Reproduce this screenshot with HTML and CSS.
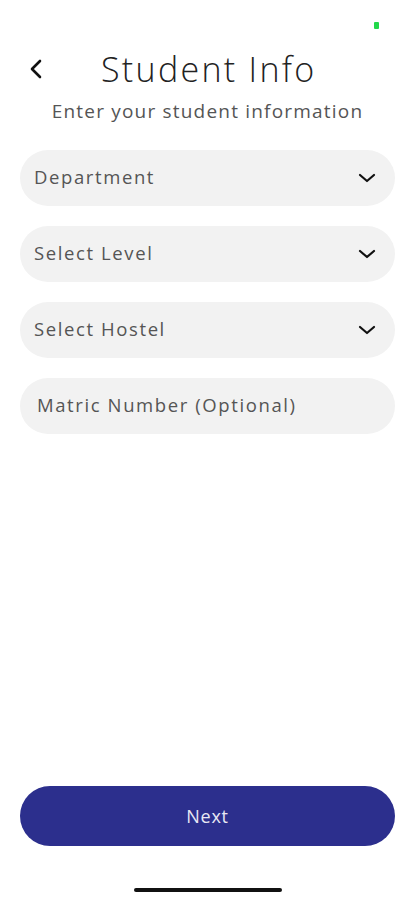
FILE: index.html
```html
<!DOCTYPE html>
<html lang="en">
<head>
    <meta charset="UTF-8">
    <title>Student Info</title>
    <link rel="stylesheet" href="styles.css">
</head>

<body>
    <div class="screen">
        <div class="status-bar">
            <span class="status-dot"></span>
        </div>

        <div class="header">
            <a class="back" href="#">
                <svg width="14" height="20" viewBox="0 0 14 20">
                    <path d="M11 2 L3 10 L11 18" fill="none" stroke="#111" stroke-width="2.6" stroke-linecap="round" stroke-linejoin="round"/>
                </svg>
            </a>
            <h1 class="title">Student Info</h1>
        </div>
        <p class="subtitle">Enter your student information</p>

        <form class="form">
            <div class="field select">
                <span class="label">Department</span>
                <svg class="chevron" width="18" height="10" viewBox="0 0 18 10">
                    <path d="M2 2 L9 8 L16 2" fill="none" stroke="#111" stroke-width="2.2" stroke-linecap="round" stroke-linejoin="round"/>
                </svg>
            </div>
            <div class="field select">
                <span class="label">Select Level</span>
                <svg class="chevron" width="18" height="10" viewBox="0 0 18 10">
                    <path d="M2 2 L9 8 L16 2" fill="none" stroke="#111" stroke-width="2.2" stroke-linecap="round" stroke-linejoin="round"/>
                </svg>
            </div>
            <div class="field select">
                <span class="label">Select Hostel</span>
                <svg class="chevron" width="18" height="10" viewBox="0 0 18 10">
                    <path d="M2 2 L9 8 L16 2" fill="none" stroke="#111" stroke-width="2.2" stroke-linecap="round" stroke-linejoin="round"/>
                </svg>
            </div>
            <div class="field input">
                <span class="label">Matric Number (Optional)</span>
            </div>
        </form>

        <div class="spacer"></div>

        <button class="next" type="button">Next</button>

        <div class="home-bar"></div>
    </div>
</body>

</html>
```

FILE: styles.css
```css
* {
    box-sizing: border-box;
}

body {
    margin: 0;
    background: #fff;
    font-family: "Open Sans", "Noto Sans", sans-serif;
    color: #222;
}

.screen {
    width: 415px;
    height: 900px;
    display: flex;
    flex-direction: column;
    padding: 0 20px;
}

.status-bar {
    height: 49px;
    display: flex;
    justify-content: flex-end;
    padding: 22px 16px 0 0;
}

.status-dot {
    width: 5px;
    height: 7px;
    border-radius: 1px;
    background: #22d84a;
}

.header {
    height: 40px;
    display: flex;
    align-items: center;
}

.back {
    width: 81px;
    padding-left: 9px;
    display: flex;
    align-items: center;
}

.title {
    margin: 0;
    font-size: 34px;
    font-weight: 300;
    letter-spacing: 2.3px;
    color: #222;
}

.subtitle {
    margin: 9px 0 0;
    text-align: center;
    font-size: 19px;
    font-weight: 400;
    letter-spacing: 1.2px;
    color: #555;
}

.form {
    margin-top: 26px;
    display: flex;
    flex-direction: column;
    gap: 20px;
}

.field {
    height: 56px;
    border-radius: 28px;
    background: #f2f2f2;
    display: flex;
    align-items: center;
    justify-content: space-between;
    padding: 0 19px 0 14px;
}

.field.input {
    padding-left: 17px;
}

.label {
    font-size: 18.5px;
    letter-spacing: 1.6px;
    color: #555;
    padding-bottom: 3px;
}

.spacer {
    flex: 1;
}

.next {
    height: 60px;
    border: none;
    border-radius: 30px;
    background: #2c2f8d;
    color: #e8e8f4;
    font-family: "Open Sans", "Noto Sans", sans-serif;
    font-size: 18px;
    letter-spacing: 0.8px;
}

.home-bar {
    width: 148px;
    height: 4px;
    border-radius: 2px;
    background: #111;
    margin: 42px auto 8px;
}
```
